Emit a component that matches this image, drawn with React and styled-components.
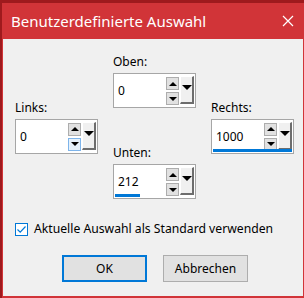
import React from 'react'
import styled, { createGlobalStyle } from 'styled-components'

const Global = createGlobalStyle`
  html, body { margin: 0; padding: 0; }
  body {
    width: 304px;
    height: 298px;
    overflow: hidden;
    background: #9e1a1d;
    font-family: "Noto Sans", "Open Sans", sans-serif;
  }
`

const Screen = styled.div`
  padding: 3px 0 0 2px;
  height: 298px;
  box-sizing: border-box;
`

const Window = styled.div`
  height: 295px;
  box-sizing: border-box;
  border: 1px solid #d13438;
  border-top: none;
  border-bottom-width: 2px;
  background: #f0f0f0;
  display: flex;
  flex-direction: column;
`

const TitleBar = styled.div`
  height: 36px;
  background: #d13438;
  color: #fff;
  display: flex;
  align-items: center;
  justify-content: space-between;
  padding: 0 10px 0 9px;
  margin: 0 -1px;
  font-size: 15px;
`

const Body = styled.div`
  padding: 15px 0 0 12px;
  display: flex;
  flex-direction: column;
`

const Fields = styled.div`
  display: grid;
  grid-template-columns: repeat(3, 83px);
  column-gap: 15px;
  align-items: center;
`

const Column = styled.div`
  display: flex;
  flex-direction: column;
  gap: 37px;
`

const Field = styled.div`
  display: flex;
  flex-direction: column;
`

const Label = styled.div`
  font-size: 12px;
  line-height: 16px;
  color: #000;
  margin-bottom: 3px;
`

const Box = styled.div`
  position: relative;
  height: 35px;
  box-sizing: border-box;
  border: 1px solid #a6a6a6;
  background: #fff;
  display: flex;
  align-items: flex-start;
  padding: 2px 1px 2px 4px;
`

const Value = styled.div`
  flex: 1;
  font-size: 12px;
  line-height: 16px;
  margin-top: 7px;
  color: #000;
`

const Spin = styled.div`
  display: flex;
  flex-direction: column;
  gap: 2px;
  margin-top: 1px;
  margin-right: 1px;
`

const SpinButton = styled.div`
  width: 11px;
  height: 11px;
  border: 1px solid ${p => (p.hot ? '#7eb4ea' : '#adadad')};
  background: ${p => (p.hot ? '#e5f1fb' : '#e1e1e1')};
  display: flex;
  align-items: center;
  justify-content: center;
`

const Arrow = styled.div`
  width: 0;
  height: 0;
  border-left: 4px solid transparent;
  border-right: 4px solid transparent;
  ${p => (p.up ? 'border-bottom: 4px solid #000;' : 'border-top: 4px solid #000;')}
`

const Drop = styled.div`
  width: 14px;
  height: 28px;
  box-sizing: border-box;
  background: #f0f0f0;
  border-left: 1px solid #fff;
  border-top: 1px solid #fff;
  border-right: 2px solid #6d6d6d;
  border-bottom: 2px solid #6d6d6d;
  display: flex;
  justify-content: center;
  padding-top: 8px;
`

const DropArrow = styled.div`
  width: 0;
  height: 0;
  border-left: 5px solid transparent;
  border-right: 5px solid transparent;
  border-top: 5px solid #000;
`

const Progress = styled.div`
  position: absolute;
  left: 1px;
  bottom: 1px;
  height: 3px;
  background: #0078d7;
`

const CheckRow = styled.label`
  display: flex;
  align-items: center;
  gap: 6px;
  margin-top: 22px;
  font-size: 12.2px;
  line-height: 16px;
  color: #000;
`

const CheckBox = styled.div`
  width: 13px;
  height: 13px;
  box-sizing: border-box;
  border: 1px solid #0078d7;
  background: #fff;
  display: flex;
  align-items: center;
  justify-content: center;
`

const Buttons = styled.div`
  display: flex;
  gap: 16px;
  margin-top: 18px;
  padding-left: 47px;
`

const Button = styled.div`
  width: 85px;
  height: 27px;
  box-sizing: border-box;
  background: #e1e1e1;
  border: ${p => (p.primary ? '2px solid #0078d7' : '1px solid #adadad')};
  display: flex;
  align-items: center;
  justify-content: center;
  font-size: 12px;
  color: #000;
`

const SpinField = ({ label, value, max, hot }) => (
  <Field>
    <Label>{label}</Label>
    <Box>
      <Value>{value}</Value>
      <Spin>
        <SpinButton><Arrow up /></SpinButton>
        <SpinButton hot={hot}><Arrow /></SpinButton>
      </Spin>
      <Drop><DropArrow /></Drop>
      {value > 0 && <Progress style={{ width: `${Math.round((value / max) * 79)}px` }} />}
    </Box>
  </Field>
)

export default function App() {
  return (
    <Screen>
      <Global />
      <Window>
        <TitleBar>
          <span>Benutzerdefinierte Auswahl</span>
          <svg width="12" height="12" viewBox="0 0 12 12">
            <path d="M1 1L11 11M11 1L1 11" stroke="#fff" strokeWidth="1.2" />
          </svg>
        </TitleBar>
        <Body>
          <Fields>
            <SpinField label="Links:" value={0} max={1000} hot />
            <Column>
              <SpinField label="Oben:" value={0} max={1000} />
              <SpinField label="Unten:" value={212} max={660} />
            </Column>
            <SpinField label="Rechts:" value={1000} max={1000} />
          </Fields>
          <CheckRow>
            <CheckBox>
              <svg width="11" height="11" viewBox="0 0 11 11">
                <path d="M1.5 5.5L4.2 8.2L9.5 2.5" fill="none" stroke="#0078d7" strokeWidth="1.2" />
              </svg>
            </CheckBox>
            Aktuelle Auswahl als Standard verwenden
          </CheckRow>
          <Buttons>
            <Button primary>OK</Button>
            <Button>Abbrechen</Button>
          </Buttons>
        </Body>
      </Window>
    </Screen>
  )
}
